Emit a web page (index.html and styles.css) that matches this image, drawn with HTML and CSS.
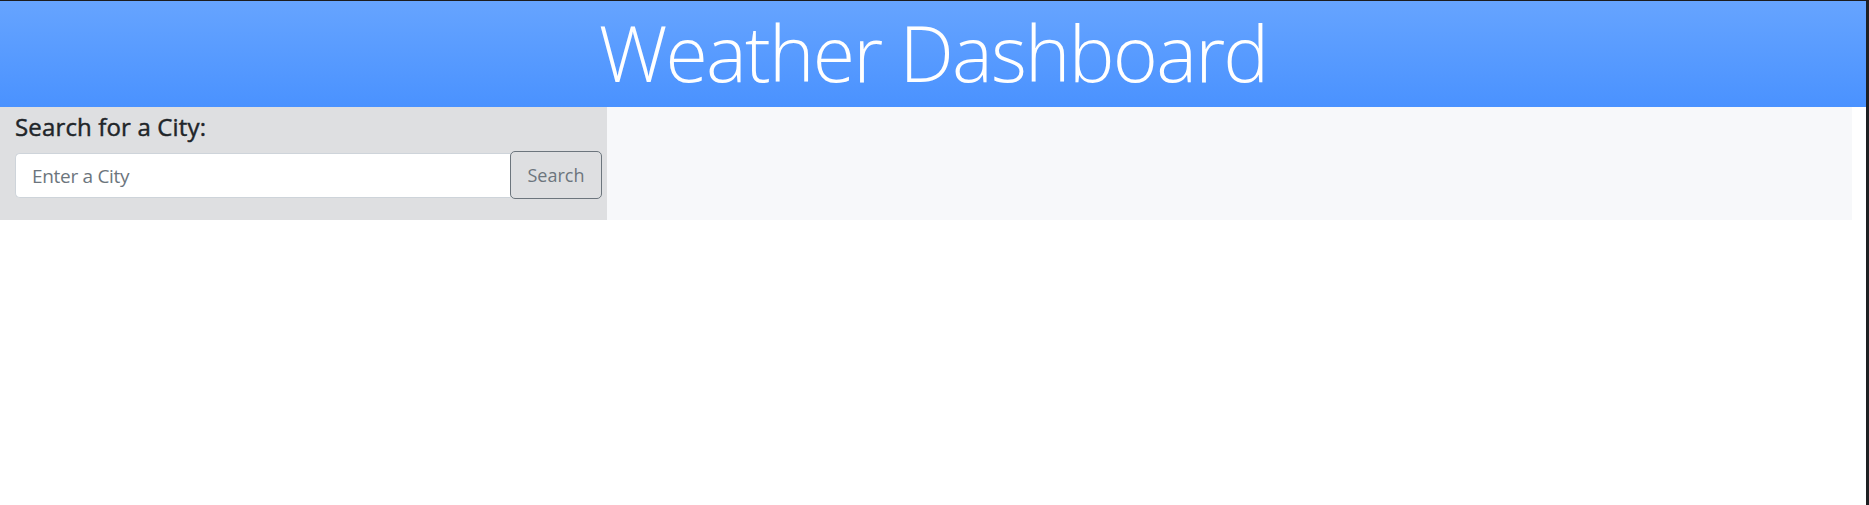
FILE: index.html
```html
<!DOCTYPE html>
<html lang="en">
<head>
<meta charset="utf-8">
<title>Weather Dashboard</title>
<link rel="stylesheet" href="styles.css">
</head>
<body>
<div class="frame">
  <header class="hero">
    <h1 class="hero-title">Weather Dashboard</h1>
  </header>
  <main class="row">
    <section class="search-panel">
      <h5 class="search-label">Search for a City:</h5>
      <div class="input-group">
        <input class="city-input" type="text" placeholder="Enter a City">
        <button class="search-btn" type="button">Search</button>
      </div>
    </section>
    <section class="results-panel"></section>
  </main>
</div>
</body>
</html>
```

FILE: styles.css
```css
* { box-sizing: border-box; }
html, body { margin: 0; padding: 0; background: #ffffff; }
body {
  font-family: "Open Sans", "Noto Sans", "Liberation Sans", sans-serif;
  color: #212529;
}
.frame {
  height: 505px;
  border-top: 1px solid #1c1c1e;
  border-right: 3px solid #1e1f22;
}
.hero {
  height: 106px;
  background: linear-gradient(to bottom, #66a4ff, #4a92ff);
  display: flex;
  justify-content: center;
  align-items: center;
}
.hero-title {
  margin: 0;
  color: #ffffff;
  font-weight: 300;
  font-size: 77px;
  line-height: 1;
  letter-spacing: -1.8px;
  padding-bottom: 4px;
}
.row {
  display: flex;
  width: 1852px;
  height: 113px;
}
.search-panel {
  width: 607px;
  background: #dedfe1;
  padding: 5px 5px 0 15px;
}
.search-label {
  margin: 0 0 10px 0;
  font-size: 24px;
  font-weight: 400;
  line-height: 30px;
  letter-spacing: 0.15px;
  -webkit-text-stroke: 0.45px #212529;
  color: #212529;
}
.input-group {
  display: flex;
  height: 46px;
}
.city-input {
  flex: 1;
  min-width: 0;
  margin: 1px 0 0 0;
  height: 45px;
  padding: 0 16px;
  font-family: inherit;
  font-size: 19px;
  letter-spacing: -0.3px;
  color: #495057;
  background: #ffffff;
  border: 1px solid #ced4da;
  border-right: none;
  border-radius: 5px 0 0 5px;
  outline: none;
}
.city-input::placeholder { color: #6c757d; }
.search-btn {
  width: 92px;
  height: 48px;
  margin-top: -1px;
  font-family: inherit;
  font-size: 18px;
  color: #6c757d;
  background: transparent;
  border: 1px solid #6c757d;
  border-radius: 5px;
  padding: 0;
}
.results-panel {
  flex: 1;
  background: #f7f8fa;
}
```
